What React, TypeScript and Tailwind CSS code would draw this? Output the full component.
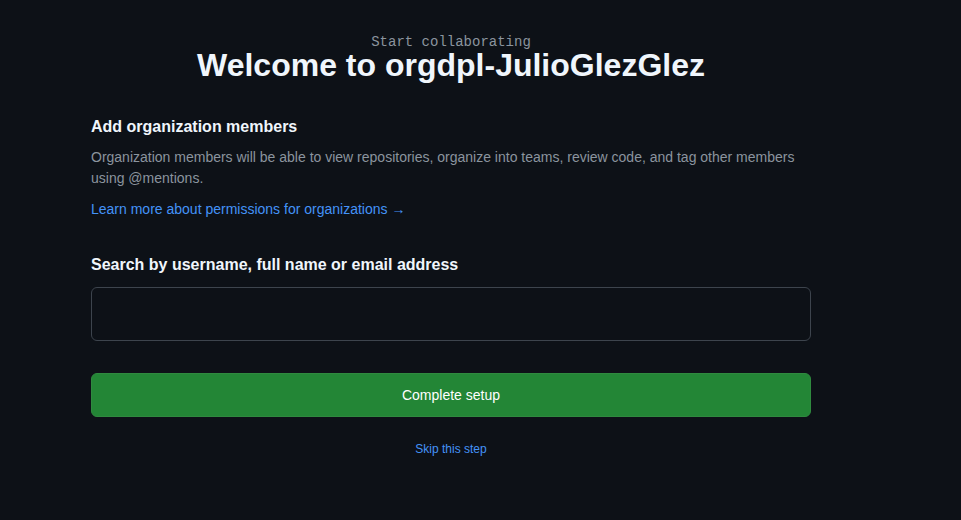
export default function App() {
  return (
    <div className="min-h-[520px] w-full bg-[#0d1117]" style={{ fontFamily: '"Liberation Sans", Arial, sans-serif' }}>
      <div className="ml-[91px] w-[720px] pt-[34px]">
        <div className="flex flex-col items-center">
          <div className="text-[14px] leading-[16px] text-[#8b949e]" style={{ fontFamily: '"Liberation Mono", monospace' }}>
            Start collaborating
          </div>
          <h1 className="text-[32px] font-bold leading-[30px] text-[#f0f6fc]">Welcome to orgdpl-JulioGlezGlez</h1>
        </div>
        <h2 className="mt-[35px] text-[16px] font-bold leading-[24px] text-[#f0f6fc]">Add organization members</h2>
        <p className="mt-[8px] text-[14px] leading-[21px] text-[#8b949e]">
          Organization members will be able to view repositories, organize into teams, review code, and tag other members using @mentions.
        </p>
        <a className="mt-[10px] block text-[14px] leading-[20px] text-[#4493f8]">Learn more about permissions for organizations →</a>
        <label className="mt-[34px] block text-[16px] font-bold leading-[24px] text-[#f0f6fc]">
          Search by username, full name or email address
        </label>
        <input className="mt-[10px] block h-[54px] w-full rounded-[6px] border border-[#3d444d] bg-[#0d1117] px-3 text-[#f0f6fc] outline-none" />
        <button className="mt-[32px] flex h-[44px] w-full items-center justify-center rounded-[6px] border border-[#2f8a3f] bg-[#238636] text-[14px] text-[#ffffff]">
          Complete setup
        </button>
        <div className="mt-[23px] text-center leading-[16px]">
          <a className="text-[12px] text-[#4493f8]">Skip this step</a>
        </div>
      </div>
    </div>
  );
}
